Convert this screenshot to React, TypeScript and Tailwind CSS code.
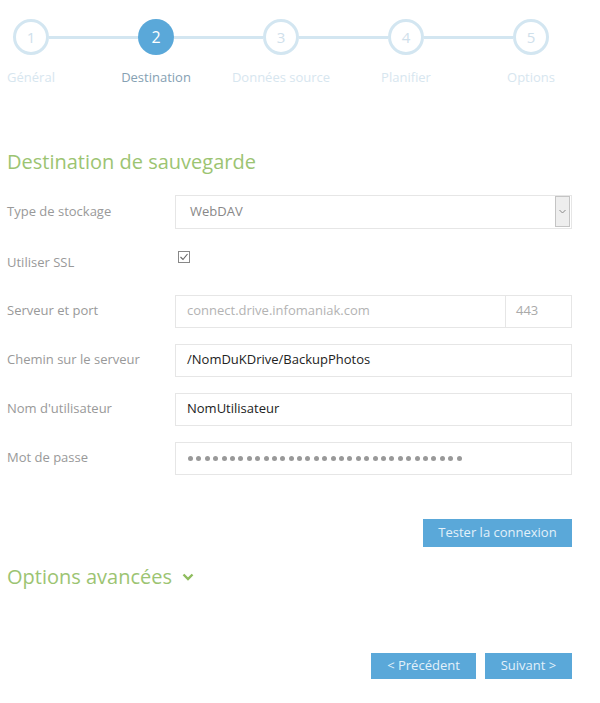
import React, { useState } from 'react';

const steps = ['Général', 'Destination', 'Données source', 'Planifier', 'Options'];

const Stepper = ({ current }: { current: number }) => {
  return (
    <div className="ml-[13px] flex w-[536px] items-start pt-[19px]">
      {steps.map((label, i) => (
        <React.Fragment key={label}>
          {i > 0 && <div className="mt-[17px] h-[3px] flex-1 bg-[#d3e6f1]" />}
          <div className="flex w-9 flex-col items-center">
            {i + 1 === current ? (
              <div className="flex h-9 w-9 items-center justify-center rounded-full bg-[#5aa8d9] text-[16px] text-white">
                {i + 1}
              </div>
            ) : (
              <div className="flex h-9 w-9 items-center justify-center rounded-full border-[3px] border-[#d3e6f1] text-[15px] text-[#cfe0eb]">
                {i + 1}
              </div>
            )}
            <div
              className={
                i + 1 === current
                  ? 'mt-[13px] whitespace-nowrap text-[13px] text-[#86a1b3]'
                  : 'mt-[13px] whitespace-nowrap text-[13px] text-[#d7e6ef]'
              }
            >
              {label}
            </div>
          </div>
        </React.Fragment>
      ))}
    </div>
  );
};

const Row = ({ label, children }: { label: string; children: React.ReactNode }) => (
  <div className="flex h-[33px] items-center">
    <div className="w-[168px] text-[13px] text-[#999]">{label}</div>
    <div className="flex h-full flex-1">{children}</div>
  </div>
);

const App = () => {
  const [ssl, setSsl] = useState(true);

  return (
    <div className="h-[703px] w-[600px] bg-white font-['Open_Sans',sans-serif]">
      <Stepper current={2} />

      <div className="pl-[7px] pr-[28px]">
        <h1 className="mt-[59px] text-[20px] font-normal text-[#9cc472]">Destination de sauvegarde</h1>

        <div className="mt-[18px] flex flex-col gap-4">
          <div className="flex h-[34px] items-center">
            <div className="w-[168px] text-[13px] text-[#999]">Type de stockage</div>
            <div className="flex h-full flex-1 items-center border border-[#e6e6e6] pl-[14px] pr-[1px]">
              <span className="flex-1 text-[13px] text-[#888]">WebDAV</span>
              <span className="flex h-[31px] w-[15px] items-center justify-center border border-[#c4c4c4] bg-[#eeeeee]">
                <svg width="7" height="5" viewBox="0 0 7 5" fill="none" stroke="#888" strokeWidth="1">
                  <path d="M0.5 1 L3.5 4 L6.5 1" />
                </svg>
              </span>
            </div>
          </div>

          <div className="flex h-[34px] items-center">
            <div className="mt-[2px] w-[168px] text-[13px] text-[#999]">Utiliser SSL</div>
            <button
              type="button"
              onClick={() => setSsl(!ssl)}
              className="mb-[9px] ml-[3px] flex h-[12px] w-[12px] items-center justify-center border border-[#888] bg-white"
            >
              {ssl && (
                <svg width="10" height="10" viewBox="0 0 10 10" fill="none" stroke="#666" strokeWidth="1.1">
                  <path d="M1.5 5 L4 7.5 L8.5 2" />
                </svg>
              )}
            </button>
          </div>

          <Row label="Serveur et port">
            <div className="flex flex-1 items-center border border-[#e6e6e6] pl-[11px] text-[13px] text-[#b3b3b3]">
              connect.drive.infomaniak.com
            </div>
            <div className="flex w-[66px] items-center border border-l-0 border-[#e6e6e6] pl-[10px] text-[13px] text-[#aaa]">
              443
            </div>
          </Row>

          <Row label="Chemin sur le serveur">
            <div className="flex flex-1 items-center border border-[#e6e6e6] pl-[11px] text-[13px] text-[#222]">
              /NomDuKDrive/BackupPhotos
            </div>
          </Row>

          <Row label="Nom d'utilisateur">
            <div className="flex flex-1 items-center border border-[#e6e6e6] pl-[11px] text-[13px] text-[#222]">
              NomUtilisateur
            </div>
          </Row>

          <Row label="Mot de passe">
            <div className="flex flex-1 items-center gap-[3.4px] border border-[#e6e6e6] pl-[12px]">
              {Array.from({ length: 33 }).map((_, i) => (
                <span key={i} className="h-[5px] w-[5px] rounded-full bg-[#999]" />
              ))}
            </div>
          </Row>
        </div>

        <div className="mt-[44px] flex justify-end">
          <button className="h-[28px] w-[149px] bg-[#5aa8d9] text-[13px] text-[#e3f1fa]">Tester la connexion</button>
        </div>

        <div className="mt-[15px] flex items-center gap-[10px] text-[20px] font-normal text-[#9cc472]">
          <span>Options avancées</span>
          <svg width="12" height="8" viewBox="0 0 12 8" fill="none" stroke="#8fbd5e" strokeWidth="2.4">
            <path d="M1.5 1.5 L6 6 L10.5 1.5" />
          </svg>
        </div>

        <div className="mt-[61px] flex justify-end gap-[9px]">
          <button className="h-[26px] w-[105px] bg-[#5aa8d9] text-[13px] text-[#e3f1fa]">&lt; Précédent</button>
          <button className="h-[26px] w-[87px] bg-[#5aa8d9] text-[13px] text-[#e3f1fa]">Suivant &gt;</button>
        </div>
      </div>
    </div>
  );
};

export default App;
